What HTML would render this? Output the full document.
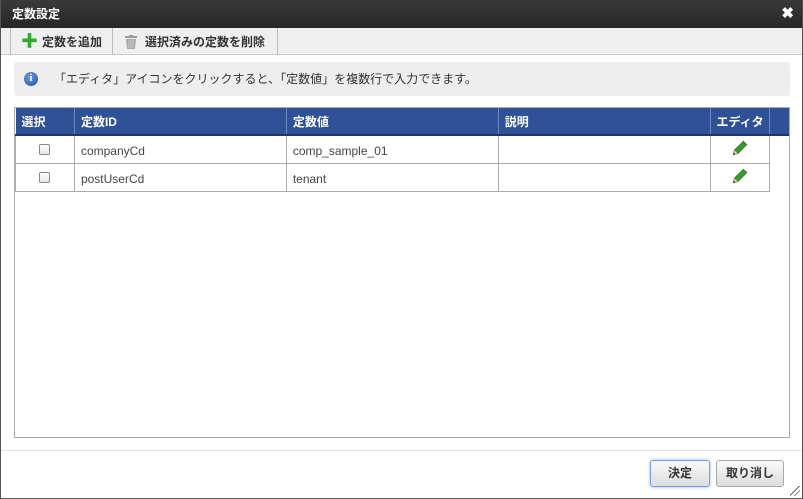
<!DOCTYPE html>
<html><head><meta charset="utf-8"><style>
*{box-sizing:border-box;margin:0;padding:0}
body{width:803px;height:499px;overflow:hidden;background:#fff;font-family:"Liberation Sans","Noto Sans CJK JP",sans-serif;font-size:12px;color:#333;position:relative}
.frame{position:absolute;left:0;top:0;width:803px;height:499px;border:1px solid #555;border-top:none}
.title{position:absolute;left:0;top:0;width:803px;height:28px;background:linear-gradient(#3a3a3a,#262626);color:#fff;font-weight:bold;font-size:12px;line-height:28px;padding-left:12px}
.close{position:absolute;right:9px;top:0;color:#fff;font-size:15px;font-weight:bold}
.tb{position:absolute;left:1px;top:28px;width:801px;height:27px;background:#efefef;border-bottom:1px solid #ccc}
.btn{position:absolute;top:0;height:27px;line-height:28px;font-weight:bold;font-size:12px;color:#333;border-left:1px solid #bbb;border-right:1px solid #bbb}
.info{position:absolute;left:14px;top:62px;width:776px;height:34px;background:#eee;border-radius:3px;line-height:34px;padding-left:40px;font-size:12px}
.ic{position:absolute;left:10px;top:10px;width:14px;height:14px;border-radius:50%;background:radial-gradient(circle at 40% 35%,#6d9be0,#1c4ea8);color:#fff;font-size:10px;font-weight:bold;line-height:14px;text-align:center;font-family:"Liberation Serif",serif}
.tbl{position:absolute;left:14px;top:107px;width:776px;height:331px;border:1px solid #aaa}
table{border-collapse:collapse;position:absolute;left:0;top:0}
th{background:#2f5197;color:#fff;height:27px;text-align:left;padding-left:6px;padding-top:0;font-size:12px;border-right:1px solid #6a85c0;border-bottom:2px solid #1d3670}
td{height:28px;border:1px solid #aaa;padding-left:6px;padding-top:3px;font-size:12px;color:#444}
.cb{width:11px;height:11px;border:1px solid #888;border-radius:2px;background:linear-gradient(#fff,#e6e6e6);margin:0 auto}
.foot{position:absolute;left:1px;top:450px;width:801px;border-top:1px solid #e3e3e3}
.b{position:absolute;top:460px;height:27px;border:1px solid #aaa;border-radius:3px;background:linear-gradient(#fafafa,#ddd);text-align:center;line-height:25px;font-weight:bold;font-size:12px;color:#333}
</style></head><body>
<div class="title">定数設定<span class="close">✖</span></div>
<div class="tb">
<div class="btn" style="left:9px;width:103px;padding-left:12px"><span style="color:#2eaa2e;font-size:17px;font-weight:bold;position:absolute;left:10px;top:0px">✚</span><span style="padding-left:19px">定数を追加</span></div>
<div class="btn" style="left:112px;width:165px;border-left:none"><svg style="position:absolute;left:12px;top:7px" width="12" height="14" viewBox="0 0 12 14"><rect x="0" y="1" width="12" height="2" fill="#999"/><rect x="4" y="0" width="4" height="2" fill="#999"/><path d="M1 4h10l-1 10H2z" fill="#aaa"/><path d="M4 5v8M6 5v8M8 5v8" stroke="#ccc" stroke-width=".8"/></svg><span style="padding-left:32px">選択済みの定数を削除</span></div>
</div>
<div class="info"><span class="ic">i</span>「エディタ」アイコンをクリックすると、「定数値」を複数行で入力できます。</div>
<div class="tbl"><table>
<tr><th style="width:59px">選択</th><th style="width:212px">定数ID</th><th style="width:212px">定数値</th><th style="width:212px">説明</th><th style="width:60px">エディタ</th><th style="width:19px;border-right:none"></th></tr>
<tr><td style="padding:0"><div class="cb"></div></td><td>companyCd</td><td>comp_sample_01</td><td></td><td style="text-align:center;padding:0"><svg width="18" height="18" viewBox="0 0 16 16"><path d="M2 14l1-4 8-8 3 3-8 8z" fill="#3a9a2a" stroke="#2a6e1c" stroke-width=".7"/><path d="M2 14l1-4 3 3z" fill="#e8d0a0"/><path d="M2 14l.5-2 1.5 1.5z" fill="#333"/></svg></td></tr>
<tr><td style="padding:0"><div class="cb"></div></td><td>postUserCd</td><td>tenant</td><td></td><td style="text-align:center;padding:0"><svg width="18" height="18" viewBox="0 0 16 16"><path d="M2 14l1-4 8-8 3 3-8 8z" fill="#3a9a2a" stroke="#2a6e1c" stroke-width=".7"/><path d="M2 14l1-4 3 3z" fill="#e8d0a0"/><path d="M2 14l.5-2 1.5 1.5z" fill="#333"/></svg></td></tr>
</table></div>
<div class="foot"></div>
<div class="b" style="left:650px;width:60px;border-color:#7a9be0;box-shadow:0 0 3px #9bb5f0">決定</div>
<div class="b" style="left:716px;width:68px">取り消し</div>
<div style="position:absolute;right:3px;bottom:3px;width:10px;height:10px;background:linear-gradient(135deg,transparent 45%,#666 45%,#666 52%,transparent 52%,transparent 68%,#666 68%,#666 75%,transparent 75%)"></div>
<div class="frame"></div>
</body></html>
